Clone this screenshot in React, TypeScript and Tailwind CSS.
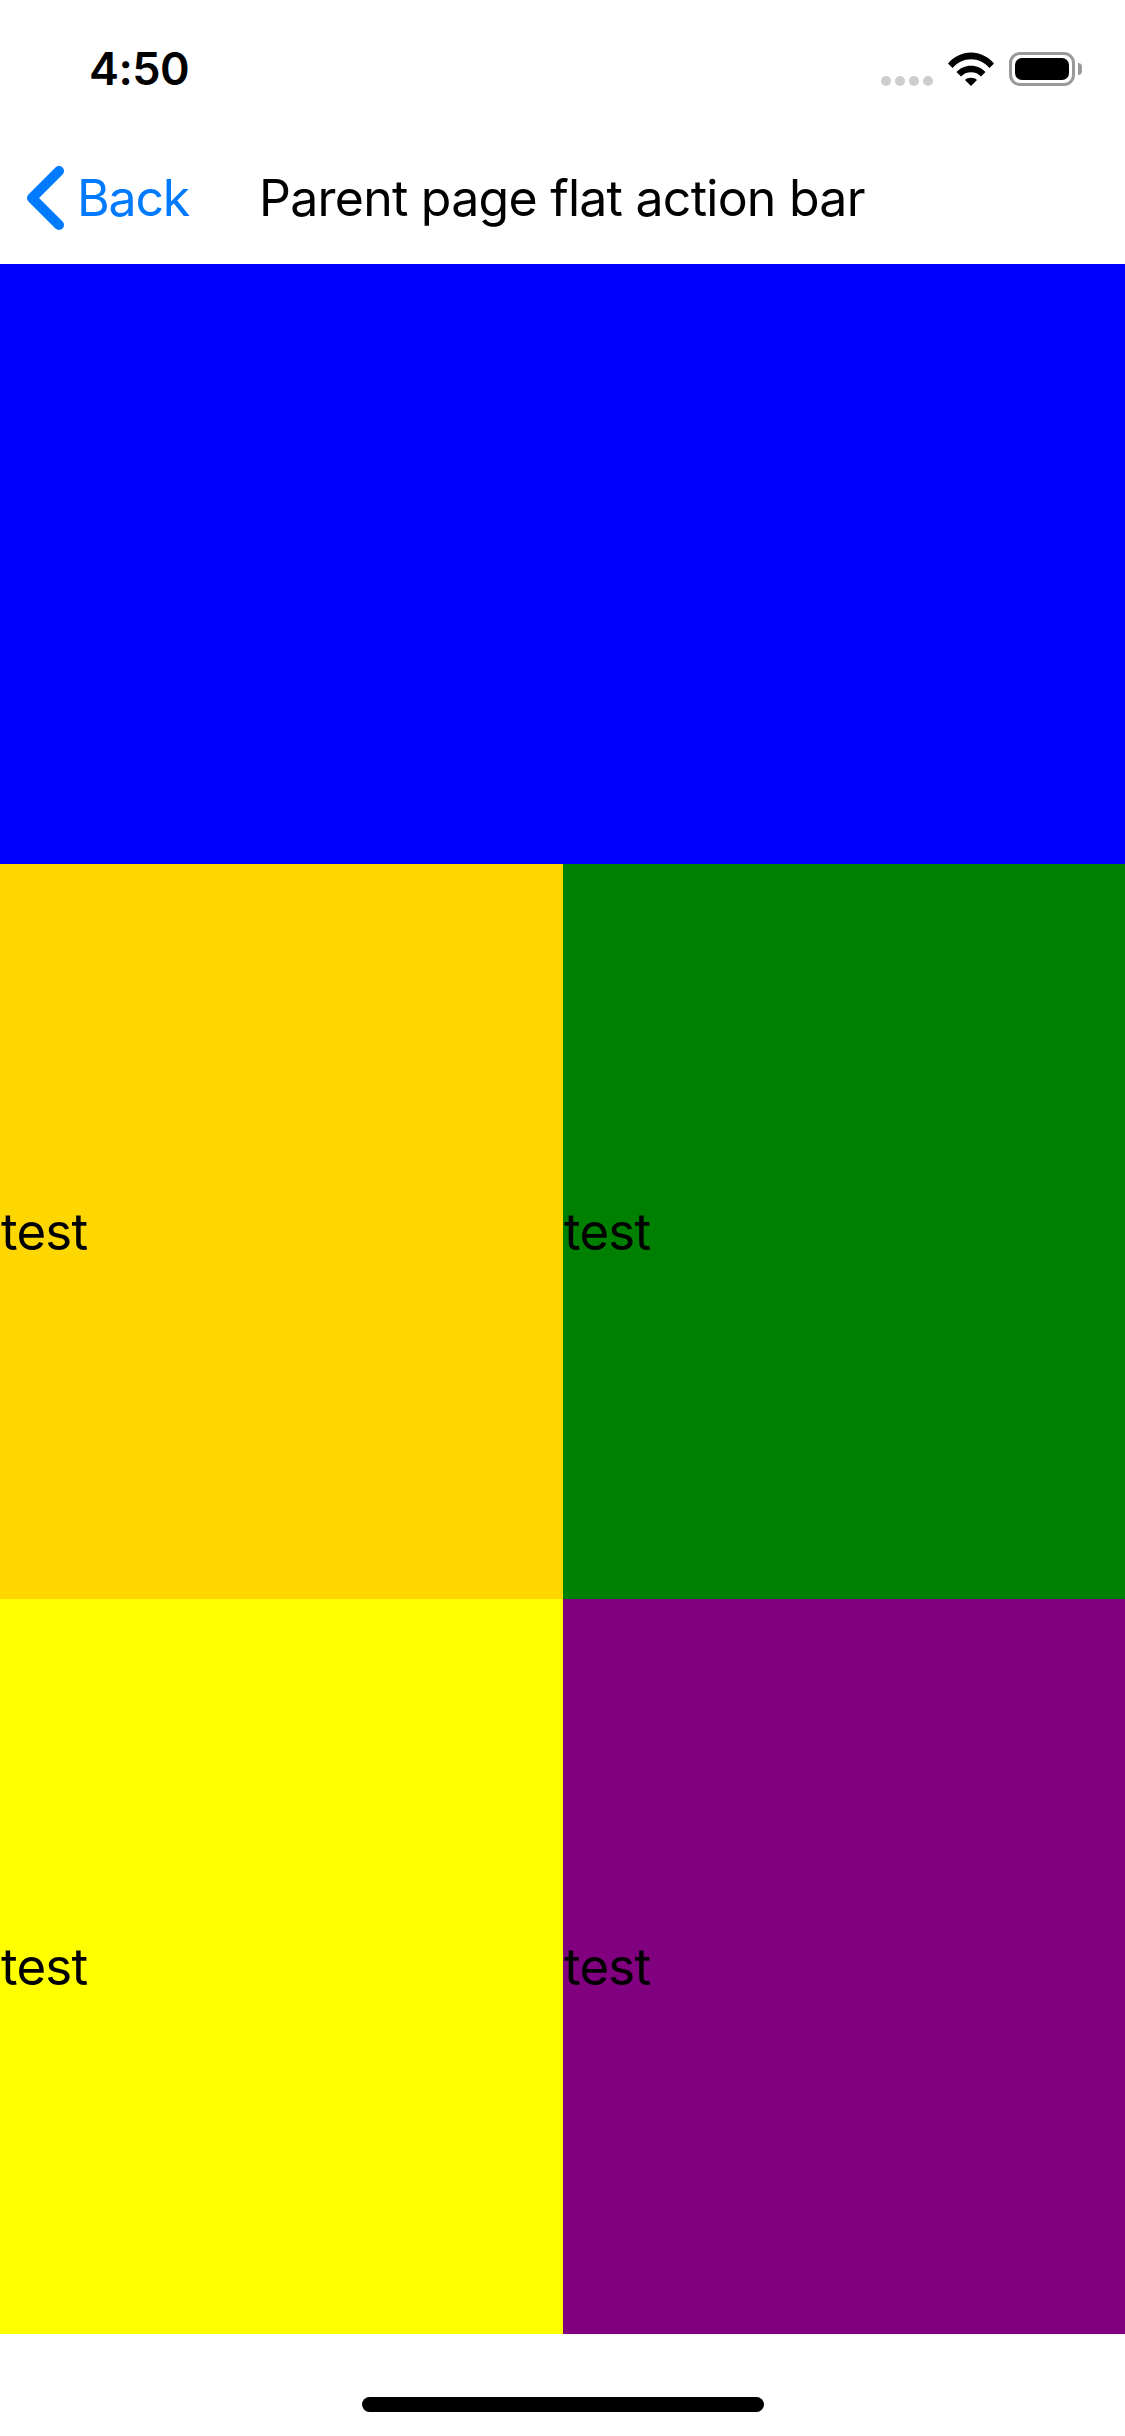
import React from 'react'

const font = "font-['Inter',sans-serif]"

const StatusIcons = () => (
  <div className="flex items-start">
    <div className="flex gap-[4px] mt-[24px]">
      <div className="w-[10px] h-[10px] rounded-full bg-[#cdcdcd]" />
      <div className="w-[10px] h-[10px] rounded-full bg-[#cdcdcd]" />
      <div className="w-[10px] h-[10px] rounded-full bg-[#cdcdcd]" />
      <div className="w-[10px] h-[10px] rounded-full bg-[#cdcdcd]" />
    </div>
    <svg width="46" height="34" viewBox="0 0 46 34" className="ml-[15px]">
      <path d="M0 11.5C6 4.5 14 0.5 23 0.5S40 4.5 46 11.5L41.5 16C36.5 10.5 30 7.3 23 7.3S9.500 10.500 4.500 16Z" fill="#000" />
      <path d="M8.500 20C12 16 17 13.700 23 13.700S34 16 37.500 20L33 24.500C30.500 21.800 27 20.300 23 20.300S15.500 21.800 13 24.500Z" fill="#000" />
      <path d="M17 28C18.500 26.500 20.500 25.700 23 25.700S27.500 26.500 29 28L23 34Z" fill="#000" />
    </svg>
    <div className="ml-[15px] w-[66px] h-[34px] rounded-[11px] border-[3px] border-[#999999] p-[3px]">
      <div className="w-full h-full rounded-[7px] bg-black" />
    </div>
    <div className="ml-[3px] mt-[11px] w-[4px] h-[12px] rounded-r-[4px] bg-[#999999]" />
  </div>
)

const Cell = ({ color }: { color: string }) => (
  <div className={`flex items-center ${color}`}>
    <span className="text-[51px] leading-none tracking-[-0.8px] text-black pl-[1px]">test</span>
  </div>
)

export default function App() {
  return (
    <div className={`w-[1125px] h-[2436px] bg-white flex flex-col ${font}`}>
      <div className="h-[132px] pl-[89px] pr-[43px] flex justify-between items-start pt-[52px]">
        <span className="text-[45px] leading-[34px] font-semibold tracking-[-0.5px] text-black">4:50</span>
        <StatusIcons />
      </div>
      <div className="h-[132px] flex items-center pl-[27px]">
        <svg width="37" height="64" viewBox="0 0 37 64" fill="none" stroke="#007aff" strokeWidth="10" strokeLinecap="round" strokeLinejoin="round">
          <path d="M32 5L5 32L32 59" />
        </svg>
        <span className="ml-[13px] text-[50px] leading-none tracking-[-1.2px] text-[#007aff]">Back</span>
        <span className="ml-[70px] text-[50px] leading-none tracking-[-0.75px] text-black">Parent page flat action bar</span>
      </div>
      <div className="h-[600px] bg-[#0000ff]" />
      <div className="grid grid-cols-[563px_562px] grid-rows-[735px_735px]">
        <Cell color="bg-[#ffd700]" />
        <Cell color="bg-[#008000]" />
        <Cell color="bg-[#ffff00]" />
        <Cell color="bg-[#800080]" />
      </div>
      <div className="flex-1 flex justify-center pt-[63px]">
        <div className="w-[402px] h-[15px] rounded-full bg-black" />
      </div>
    </div>
  )
}
